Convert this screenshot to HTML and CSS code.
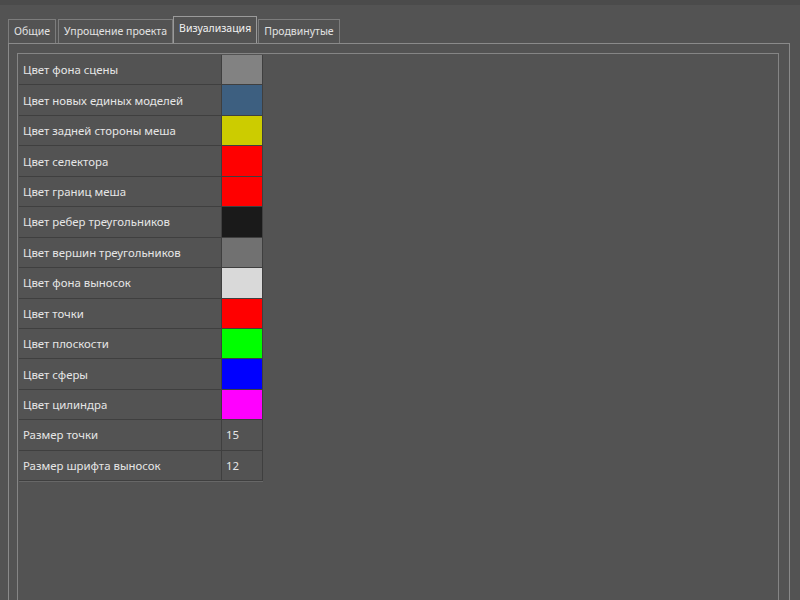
FILE: index.html
```html
<!DOCTYPE html>
<html>
<head>
<meta charset="utf-8">
<link rel="stylesheet" href="styles.css">
</head>
<body>
<div class="topbar"></div>
<div class="tabs">
  <div class="tab">Общие</div>
  <div class="tab">Упрощение проекта</div>
  <div class="tab active">Визуализация</div>
  <div class="tab">Продвинутые</div>
</div>
<div class="pane">
  <div class="frame">
    <div class="table">
      <div class="label">Цвет фона сцены</div><div class="val"><span class="sw" style="background:#828282"></span></div>
      <div class="label">Цвет новых единых моделей</div><div class="val"><span class="sw" style="background:#3d5f80"></span></div>
      <div class="label">Цвет задней стороны меша</div><div class="val"><span class="sw" style="background:#cccc00"></span></div>
      <div class="label">Цвет селектора</div><div class="val"><span class="sw" style="background:#ff0000"></span></div>
      <div class="label">Цвет границ меша</div><div class="val"><span class="sw" style="background:#ff0000"></span></div>
      <div class="label">Цвет ребер треугольников</div><div class="val"><span class="sw" style="background:#1a1a1a"></span></div>
      <div class="label">Цвет вершин треугольников</div><div class="val"><span class="sw" style="background:#717171"></span></div>
      <div class="label">Цвет фона выносок</div><div class="val"><span class="sw" style="background:#d9d9d9"></span></div>
      <div class="label">Цвет точки</div><div class="val"><span class="sw" style="background:#ff0000"></span></div>
      <div class="label">Цвет плоскости</div><div class="val"><span class="sw" style="background:#00ff00"></span></div>
      <div class="label">Цвет сферы</div><div class="val"><span class="sw" style="background:#0000ff"></span></div>
      <div class="label">Цвет цилиндра</div><div class="val"><span class="sw" style="background:#ff00ff"></span></div>
      <div class="label">Размер точки</div><div class="val num">15</div>
      <div class="label">Размер шрифта выносок</div><div class="val num">12</div>
    </div>
  </div>
</div>
</body>
</html>
```
FILE: styles.css
```css
html, body {
  margin: 0;
  padding: 0;
  background: #535353;
  height: 600px;
  overflow: hidden;
  font-family: "Noto Sans", "DejaVu Sans", sans-serif;
  font-size: 11.4px;
  color: #e6e6e6;
}
.topbar {
  height: 5px;
  background: #4b4b4b;
}
.tabs {
  display: flex;
  align-items: flex-end;
  gap: 2px;
  margin-left: 8px;
  margin-top: 11px;
  height: 27px;
  font-size: 10.5px;
}
.tab {
  height: 23px;
  line-height: 23px;
  padding: 0 5px;
  border: 1px solid #7c7c7c;
  border-bottom: none;
  color: #e2e2e2;
  background: #535353;
  white-space: nowrap;
}
.tab.active {
  height: 26px;
  line-height: 22px;
  margin: 0 -1px 0 -2px;
  border-color: #9a9a9a;
  color: #f2f2f2;
  position: relative;
  z-index: 1;
}
.pane {
  margin-left: 8px;
  width: 782px;
  height: 557px;
  overflow: hidden;
  border: 1px solid #8a8a8a;
  border-bottom: none;
  box-sizing: border-box;
  padding: 9px 10px 0 8px;
}
.frame {
  height: 560px;
  border: 1px solid #858585;
  padding: 1px;
}
.table {
  display: grid;
  grid-template-columns: 203px 41px;
  grid-auto-rows: 30.45px;
  width: 244px;
  border-bottom: 1px solid #676767;
}
.label, .val {
  border-right: 1px solid #3f3f3f;
  border-bottom: 1px solid #3f3f3f;
  box-sizing: border-box;
  display: flex;
  align-items: center;
}
.label {
  padding-left: 4px;
  white-space: nowrap;
}
.val {
  padding: 0;
}
.sw {
  display: block;
  width: 100%;
  height: 100%;
}
.num {
  padding-left: 4px;
}
```
